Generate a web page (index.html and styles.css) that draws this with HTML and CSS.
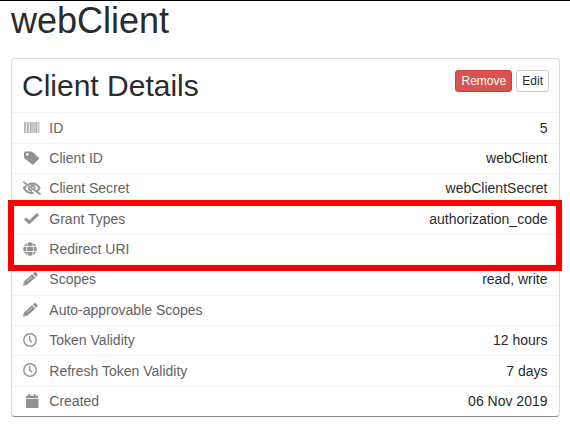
FILE: index.html
```html
<!DOCTYPE html>
<html lang="en">
<head>
<meta charset="utf-8">
<title>webClient</title>
<link rel="stylesheet" href="styles.css">
</head>
<body>
<h1 class="title">webClient</h1>
<section class="panel">
  <header class="panel-head">
    <h2>Client Details</h2>
    <div class="actions"><button class="btn danger">Remove</button><button class="btn">Edit</button></div>
  </header>
  <div class="row"><svg class="icon" viewBox="0 0 20 18"><path fill="#c8c8c8" d="M2 3h15.500v11H2z"/><path stroke="#b2b2b2" d="M2.500 3v11M5.500 3v11M8.500 3v11M14.500 3v11"/><path stroke="#e2e2e2" d="M4.500 3v11M7.500 3v11M15.500 3v11"/></svg><span class="label">ID</span><span class="value">5</span></div>
  <div class="row"><svg class="icon" viewBox="0 0 20 18"><path fill-rule="evenodd" d="M2 4Q2 2.500 3.500 2.500H9q1 0 1.700.7l5.900 5.300q.9.900 0 1.800l-5 5q-.9.900-1.800 0L2.700 9.500Q2 8.800 2 7.800zM5.300 4.100a1.300 1.300 0 1 0 0 2.600 1.300 1.300 0 0 0 0-2.600z"/></svg><span class="label">Client ID</span><span class="value">webClient</span></div>
  <div class="row"><svg class="icon" viewBox="0 0 20 18"><path class="line" stroke-width="2" d="M6.500 5.200Q14 2.500 17.500 9.200 16.300 11.500 14.300 12.700M4.300 6.800Q2.700 8 2 9.200 5.500 15 11.600 13.600"/><path class="line" stroke-width="1.900" d="M9 6.700q3.500-.8 4 2.900M6.700 8.500q0 3 3.300 3.300"/><path class="line" stroke-width="1.600" d="M1.300 2.800 18.500 15.500"/></svg><span class="label">Client Secret</span><span class="value">webClientSecret</span></div>
  <div class="row"><svg class="icon" viewBox="0 0 20 18"><path class="line" stroke-width="3.100" d="m3 8.400 4.200 4L16 4.200"/></svg><span class="label">Grant Types</span><span class="value">authorization_code</span></div>
  <div class="row"><svg class="icon" viewBox="0 0 20 18"><circle cx="8" cy="9" r="6.800"/><path class="cut" d="M1 6.500h14M1 11.500h14M5.500 2q-2.200 7 0 14M10.500 2q2.200 7 0 14"/></svg><span class="label">Redirect URI</span><span class="value"></span></div>
  <div class="row"><svg class="icon" viewBox="0 0 20 18"><path d="m1 15.800 1-4.200 8-7.300 3.300 3.500-8.200 7zM10.800 3.600l1.600-1.400q.8-.7 1.600.1l1.400 1.500q.7.800-.1 1.500l-1.300 1.600z"/><path class="cut thin" d="m5 11.300 5-4.500M2.600 13.400l1.200 1.100"/></svg><span class="label">Scopes</span><span class="value">read, write</span></div>
  <div class="row"><svg class="icon" viewBox="0 0 20 18"><path d="m1 15.800 1-4.200 8-7.300 3.300 3.500-8.200 7zM10.800 3.600l1.600-1.400q.8-.7 1.600.1l1.400 1.500q.7.800-.1 1.500l-1.300 1.600z"/><path class="cut thin" d="m5 11.300 5-4.500M2.600 13.400l1.200 1.100"/></svg><span class="label">Auto-approvable Scopes</span><span class="value"></span></div>
  <div class="row"><svg class="icon" viewBox="0 0 20 18"><circle class="line" cx="8" cy="9" r="6.200" stroke-width="1.400"/><path class="line" stroke-width="1.400" d="M7.700 5v4.300l2.300 1.900"/></svg><span class="label">Token Validity</span><span class="value">12 hours</span></div>
  <div class="row"><svg class="icon up" viewBox="0 0 20 18"><circle class="line" cx="8" cy="9" r="6.200" stroke-width="1.400"/><path class="line" stroke-width="1.400" d="M7.700 5v4.300l2.300 1.900"/></svg><span class="label">Refresh Token Validity</span><span class="value">7 days</span></div>
  <div class="row"><svg class="icon" viewBox="0 0 20 18"><path d="M4 6V4.500q0-1 1-1h1.500V2H8v1.500h4V2h1.500v1.500H15q1 0 1 1V6zM4 6.700h12.500V15q0 1-1 1H5q-1 0-1-1z"/></svg><span class="label">Created</span><span class="value">06 Nov 2019</span></div>
  <div class="highlight"></div>
</section>
</body>
</html>
```
FILE: styles.css
```css
* { box-sizing: border-box; }
body {
  margin: 0;
  height: 427px;
  overflow: hidden;
  padding: 0 10px 0 11px;
  border-top: 1px solid #000;
  background: #fff;
  color: #292b2c;
  font: 14px/20px "Liberation Sans", Arial, sans-serif;
}
h1, h2 { margin: 0; font-weight: 400; }
.title { height: 57px; font-size: 36px; line-height: 40px; }
.panel {
  position: relative;
  width: 549px;
  height: 359px;
  border: 1px solid #d9d9d9;
  border-bottom-color: #888;
  border-radius: 4px;
}
.panel-head {
  display: flex;
  justify-content: space-between;
  height: 53.3px;
  padding: 11px 10px 0;
}
.panel-head h2 { font-size: 30px; line-height: 31px; }
.actions { display: flex; gap: 4px; }
.btn {
  height: 22px;
  padding: 0 5px;
  border: 1px solid #ccc;
  border-radius: 3px;
  background: #fff;
  color: #292b2c;
  font: 12px/20px "Liberation Sans", Arial, sans-serif;
}
.danger { width: 57px; background: #d9534f; border-color: #d43f3a; color: #fff; }
.row {
  display: flex;
  align-items: center;
  height: 30.375px;
  padding: 0 11.5px .77px 10px;
  border-top: 1px solid #f1f1f1;
}
.icon { width: 20px; height: 18px; margin-right: 7.3px; fill: #929292; }
.up { margin-top: -2px; }
.line { fill: none; stroke: #929292; }
.cut { fill: none; stroke: #fff; stroke-width: .8; }
.thin { stroke-width: .5; }
.label { color: #636363; }
.value { margin-left: auto; }
.highlight {
  position: absolute;
  left: -4px;
  top: 141px;
  width: 554px;
  height: 71px;
  border: 6px solid #f00;
}
```
